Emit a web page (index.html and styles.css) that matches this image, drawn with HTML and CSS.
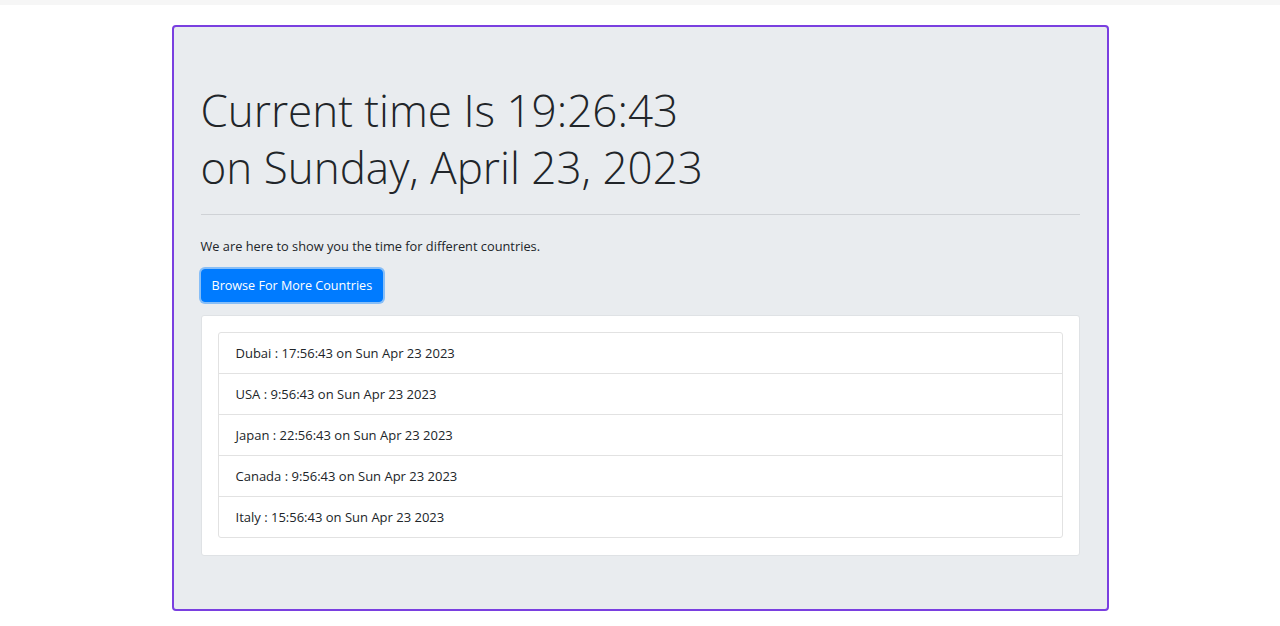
FILE: index.html
```html
<!DOCTYPE html>
<html lang="en">
<head>
<meta charset="utf-8">
<title>World Time</title>
<link rel="stylesheet" href="styles.css">
</head>
<body>
<div class="topbar"></div>
<main class="jumbotron">
  <h1 class="display">Current time Is 19:26:43<br>on Sunday, April 23, 2023</h1>
  <hr class="divider">
  <p class="lead">We are here to show you the time for different countries.</p>
  <button class="btn" type="button">Browse For More Countries</button>
  <div class="card">
    <ul class="list">
      <li class="item">Dubai : 17:56:43 on Sun Apr 23 2023</li>
      <li class="item">USA : 9:56:43 on Sun Apr 23 2023</li>
      <li class="item">Japan : 22:56:43 on Sun Apr 23 2023</li>
      <li class="item">Canada : 9:56:43 on Sun Apr 23 2023</li>
      <li class="item">Italy : 15:56:43 on Sun Apr 23 2023</li>
    </ul>
  </div>
</main>
</body>
</html>
```

FILE: styles.css
```css
* { box-sizing: border-box; }
html, body { margin: 0; padding: 0; }
body {
  background: #ffffff;
  font-family: "Open Sans", "Noto Sans", sans-serif;
  color: #212529;
  font-size: 13px;
}
.topbar {
  height: 5px;
  background: #f6f6f6;
}
.jumbotron {
  width: 937px;
  margin: 20px auto 0;
  padding: 55px 27px 53px;
  background: #e9ecef;
  border: 2px solid #7a3fe0;
  border-radius: 4px;
}
.display {
  margin: 0;
  font-size: 44px;
  font-weight: 300;
  line-height: 57px;
  color: #212529;
}
.divider {
  margin: 18px 0 21px;
  border: 0;
  border-top: 1px solid #cfd2d6;
}
.lead {
  margin: 0 0 13px;
  line-height: 20px;
  font-size: 12.8px;
}
.btn {
  display: block;
  font-family: inherit;
  font-size: 12.6px;
  color: #fff;
  background: #007bff;
  border: 1px solid #007bff;
  border-radius: 4px;
  padding: 6px 10px;
  line-height: 19px;
  box-shadow: 0 0 0 2px rgba(38, 143, 255, 0.5);
  margin-left: 0;
}
.card {
  margin-top: 13px;
  background: #fff;
  border: 1px solid #dfe2e5;
  border-radius: 3px;
  padding: 16px 16px 17px;
}
.list {
  list-style: none;
  margin: 0;
  padding: 0;
  border: 1px solid #e2e2e2;
  border-radius: 3px;
}
.item {
  height: 41px;
  padding: 10px 17px;
  line-height: 20px;
  border-top: 1px solid #e2e2e2;
}
.item:first-child { border-top: 0; height: 40px; }
```
